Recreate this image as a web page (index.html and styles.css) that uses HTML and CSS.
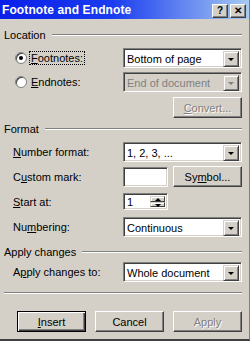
FILE: index.html
```html
<!DOCTYPE html>
<html lang="en">
<head>
    <meta charset="UTF-8">
    <title>Footnote and Endnote</title>
    <link rel="stylesheet" href="styles.css">
</head>
<body>
    <div class="dialog">
        <div class="titlebar">
            <span class="title">Footnote and Endnote</span>
            <div class="caption-buttons">
                <span class="cap-btn">?</span>
                <span class="cap-btn close">&#x2715;</span>
            </div>
        </div>

        <div class="content">
            <div class="group-head head-location"><span>Location</span><i class="etch"></i></div>

            <div class="row row-foot">
                <label class="label radio-label"><span class="radio checked"></span><span class="focus"><u>F</u>ootnotes:</span></label>
                <div class="select"><span class="value">Bottom of page</span><span class="arrow"></span></div>
            </div>
            <div class="row row-end">
                <label class="label radio-label"><span class="radio"></span><span class="plain"><u>E</u>ndnotes:</span></label>
                <div class="select disabled"><span class="value">End of document</span><span class="arrow"></span></div>
            </div>
            <div class="row row-convert">
                <button class="btn disabled"><u>C</u>onvert...</button>
            </div>

            <div class="group-head head-format"><span>Format</span><i class="etch"></i></div>

            <div class="row row-number">
                <label class="label"><u>N</u>umber format:</label>
                <div class="select"><span class="value">1, 2, 3, ...</span><span class="arrow"></span></div>
            </div>
            <div class="row row-custom">
                <label class="label">C<u>u</u>stom mark:</label>
                <div class="ctrl-split">
                    <div class="field"></div>
                    <button class="btn">Sy<u>m</u>bol...</button>
                </div>
            </div>
            <div class="row row-start">
                <label class="label"><u>S</u>tart at:</label>
                <div class="spinner">
                    <span class="value">1</span>
                    <span class="spin-btns"><span class="spin up"></span><span class="spin down"></span></span>
                </div>
            </div>
            <div class="row row-numbering">
                <label class="label">Nu<u>m</u>bering:</label>
                <div class="select"><span class="value">Continuous</span><span class="arrow"></span></div>
            </div>

            <div class="group-head head-apply"><span>Apply changes</span><i class="etch"></i></div>

            <div class="row row-apply">
                <label class="label">A<u>p</u>ply changes to:</label>
                <div class="select"><span class="value">Whole document</span><span class="arrow"></span></div>
            </div>

            <div class="separator"></div>

            <div class="footer">
                <button class="btn default"><u>I</u>nsert</button>
                <button class="btn">Cancel</button>
                <button class="btn disabled">Apply</button>
            </div>
        </div>
    </div>
</body>
</html>
```

FILE: styles.css
```css
body {
    margin: 0;
    padding: 0;
    font-family: "Liberation Sans", Arial, sans-serif;
    font-size: 11px;
    color: #000;
    background: #d4d0c8;
}

.dialog {
    width: 250px;
    height: 341px;
    box-sizing: border-box;
    background: #d4d0c8;
    border-bottom: 2px solid #404040;
    border-right: 1px solid #808080;
    overflow: hidden;
}

/* title bar */
.titlebar {
    height: 19px;
    display: flex;
    align-items: center;
    justify-content: space-between;
    background: linear-gradient(to right, #0a1ee8 0%, #1a3cf0 45%, #a6caf0 100%);
    padding: 0 3px 0 2px;
}

.title {
    color: #fff;
    font-weight: bold;
    font-size: 12px;
    letter-spacing: 0.1px;
}

.caption-buttons {
    display: flex;
    gap: 2px;
    margin-top: 2px;
}

.cap-btn {
    width: 14px;
    height: 12px;
    background: #d4d0c8;
    border: 1px solid;
    border-color: #fff #404040 #404040 #fff;
    box-shadow: inset -1px -1px #808080;
    font-size: 10px;
    font-weight: bold;
    line-height: 12px;
    text-align: center;
}

.cap-btn.close {
    font-size: 10px;
}

.content {
    padding: 0 7px 0 4px;
}

/* group headers */
.group-head {
    display: flex;
    align-items: center;
    height: 13px;
}

.group-head span {
    margin-right: 6px;
}

.etch {
    flex: 1;
    height: 0;
    border-top: 1px solid #808080;
    border-bottom: 1px solid #fff;
}

.head-location { margin-top: 9px; }
.head-format { margin-top: 4px; }
.head-apply { margin-top: 8px; }

/* rows */
.row {
    display: flex;
    align-items: center;
    height: 20px;
}

.row-foot { margin-top: 7px; }
.row-end { margin-top: 4px; }
.row-convert { margin-top: 5px; height: 21px; justify-content: flex-end; }
.row-number { margin-top: 7px; }
.row-custom { margin-top: 4px; height: 21px; }
.row-start { margin-top: 6px; height: 17px; }
.row-numbering { margin-top: 7px; }
.row-apply { margin-top: 4px; }

.label {
    width: 110px;
    padding-left: 9px;
    flex-shrink: 0;
}

.radio-label {
    display: flex;
    align-items: center;
    padding-left: 11px;
    width: 108px;
}

.radio {
    width: 10px;
    height: 10px;
    border-radius: 50%;
    background: #fff;
    border: 1px solid #808080;
    box-shadow: inset 1px 1px #404040;
    margin-right: 3px;
    position: relative;
}

.radio.checked::after {
    content: "";
    position: absolute;
    left: 3px;
    top: 3px;
    width: 4px;
    height: 4px;
    border-radius: 50%;
    background: #000;
}

.focus {
    outline: 1px dotted #000;
    padding: 0 1px;
}

.plain {
    padding: 0 1px;
}

/* combo box */
.select {
    width: 119px;
    height: 20px;
    box-sizing: border-box;
    display: flex;
    background: #fff;
    border: 1px solid;
    border-color: #808080 #fff #fff #808080;
    box-shadow: inset 1px 1px #404040, inset -1px -1px #d4d0c8;
    padding: 2px;
}

.select .value {
    flex: 1;
    padding-left: 1px;
    line-height: 16px;
}

.select.disabled {
    background: #d4d0c8;
}

.select.disabled .value {
    color: #808080;
}

.arrow {
    width: 14px;
    height: 14px;
    background: #d4d0c8;
    border: 1px solid;
    border-color: #d4d0c8 #404040 #404040 #d4d0c8;
    box-shadow: inset 1px 1px #fff, inset -1px -1px #808080;
    position: relative;
}

.arrow::after {
    content: "";
    position: absolute;
    left: 4px;
    top: 6px;
    border-left: 3px solid transparent;
    border-right: 3px solid transparent;
    border-top: 3px solid #000;
}

.select.disabled .arrow::after {
    border-top-color: #808080;
}

/* buttons */
.btn {
    width: 69px;
    height: 21px;
    box-sizing: border-box;
    font-family: inherit;
    font-size: 11px;
    background: #d4d0c8;
    border: 1px solid;
    border-color: #fff #404040 #404040 #fff;
    box-shadow: inset -1px -1px #808080;
    padding: 0;
    color: #000;
}

.btn.disabled {
    color: #808080;
    text-shadow: 1px 1px #fff;
}

.btn.default {
    border: 1px solid #000;
    box-shadow: inset 1px 1px #fff, inset -1px -1px #404040, inset -2px -2px #808080;
}

.ctrl-split {
    display: flex;
    align-items: center;
    gap: 5px;
}

.field {
    width: 45px;
    height: 20px;
    box-sizing: border-box;
    background: #fff;
    border: 1px solid;
    border-color: #808080 #fff #fff #808080;
    box-shadow: inset 1px 1px #404040, inset -1px -1px #d4d0c8;
}

/* spinner */
.spinner {
    width: 45px;
    height: 17px;
    box-sizing: border-box;
    display: flex;
    background: #fff;
    border: 1px solid;
    border-color: #808080 #fff #fff #808080;
    box-shadow: inset 1px 1px #404040, inset -1px -1px #d4d0c8;
    padding: 2px 2px 2px 3px;
}

.spinner .value {
    flex: 1;
    line-height: 13px;
}

.spin-btns {
    display: flex;
    flex-direction: column;
    width: 15px;
}

.spin {
    flex: 1;
    background: #d4d0c8;
    border: 1px solid;
    border-color: #d4d0c8 #404040 #404040 #d4d0c8;
    box-shadow: inset 1px 1px #fff;
    position: relative;
}

.spin::after {
    content: "";
    position: absolute;
    left: 4px;
    border-left: 3px solid transparent;
    border-right: 3px solid transparent;
}

.spin.up::after {
    top: 1px;
    border-bottom: 3px solid #000;
}

.spin.down::after {
    top: 1px;
    border-top: 3px solid #000;
}

/* bottom */
.separator {
    margin-top: 10px;
    border-top: 1px solid #808080;
    border-bottom: 1px solid #fff;
}

.footer {
    display: flex;
    justify-content: flex-end;
    gap: 9px;
    margin-top: 17px;
}
```
